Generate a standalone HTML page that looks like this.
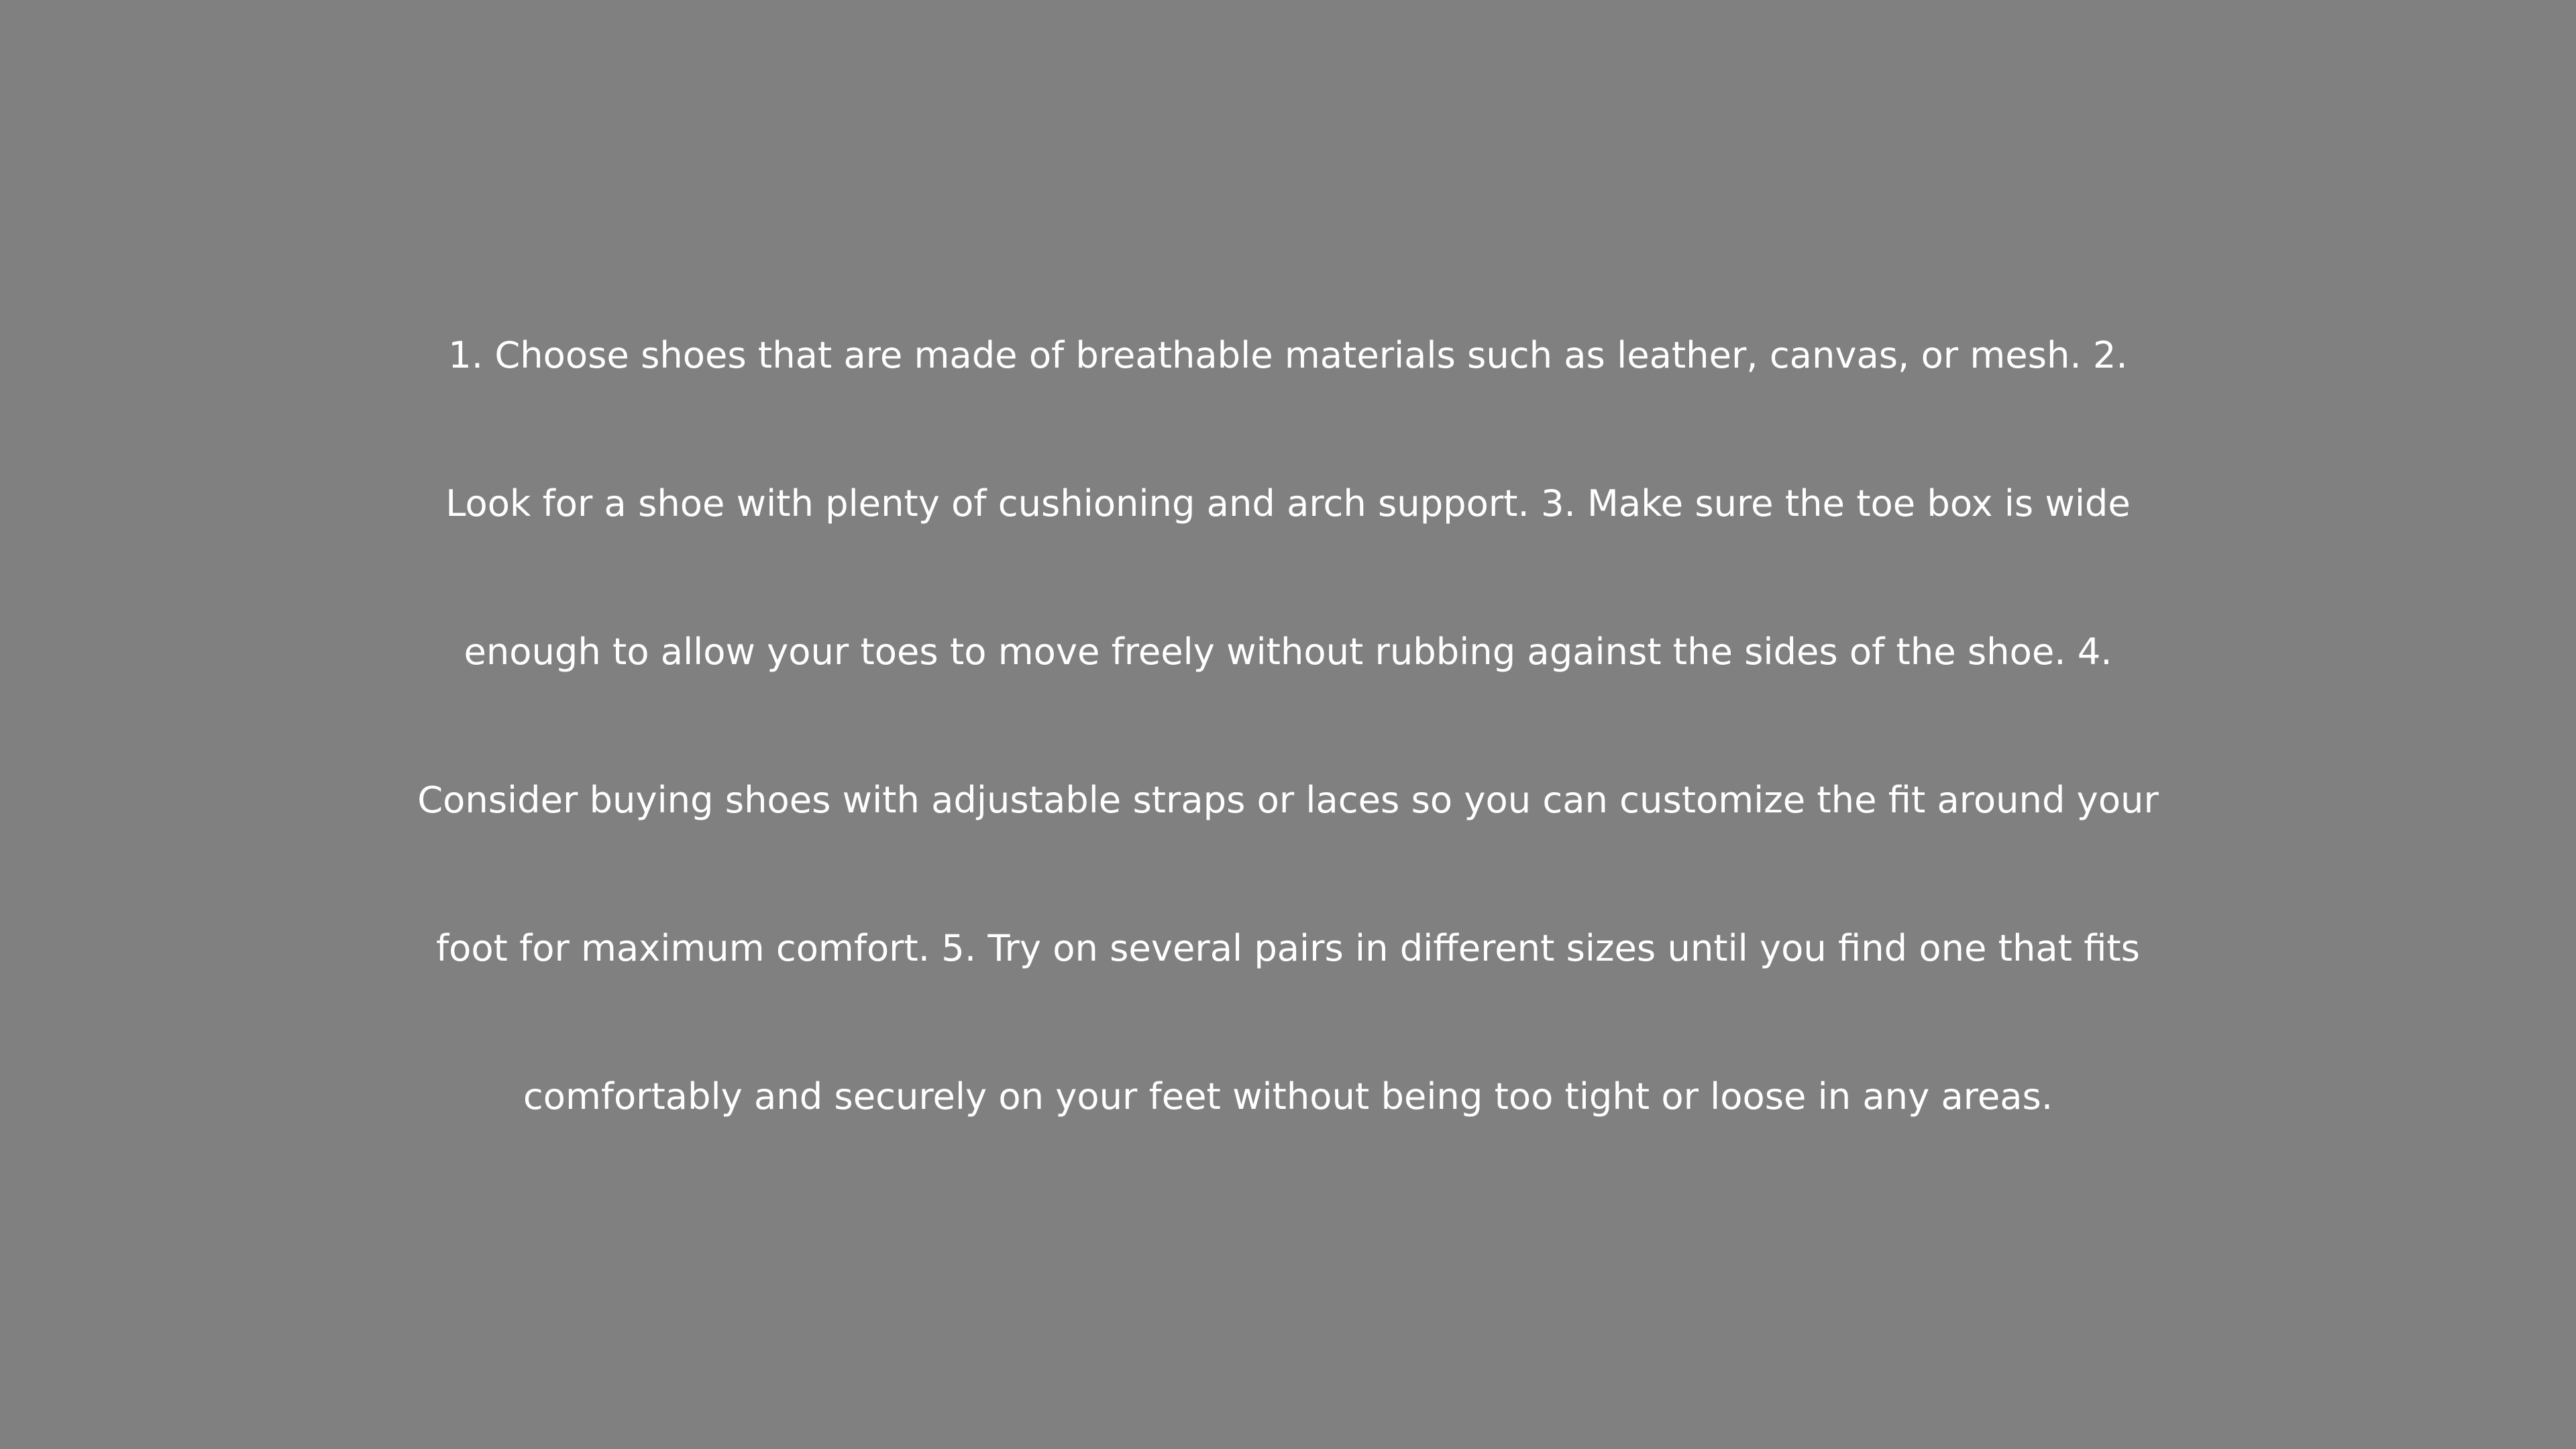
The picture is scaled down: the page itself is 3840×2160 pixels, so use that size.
<!DOCTYPE html>
<html><head><meta charset="utf-8"><style>
html,body{margin:0;padding:0;width:3840px;height:2160px;background:#808080;overflow:hidden}
.t{position:absolute;left:0;top:419px;width:3840px;text-align:center;color:#fff;font-family:"DejaVu Sans",Verdana,sans-serif;font-size:54.3px;line-height:221px;white-space:nowrap}
</style></head><body>
<div class="t">1. Choose shoes that are made of breathable materials such as leather, canvas, or mesh. 2.<br>Look for a shoe with plenty of cushioning and arch support. 3. Make sure the toe box is wide<br>enough to allow your toes to move freely without rubbing against the sides of the shoe. 4.<br>Consider buying shoes with adjustable straps or laces so you can customize the fit around your<br>foot for maximum comfort. 5. Try on several pairs in different sizes until you find one that fits<br>comfortably and securely on your feet without being too tight or loose in any areas.</div>
</body></html>
